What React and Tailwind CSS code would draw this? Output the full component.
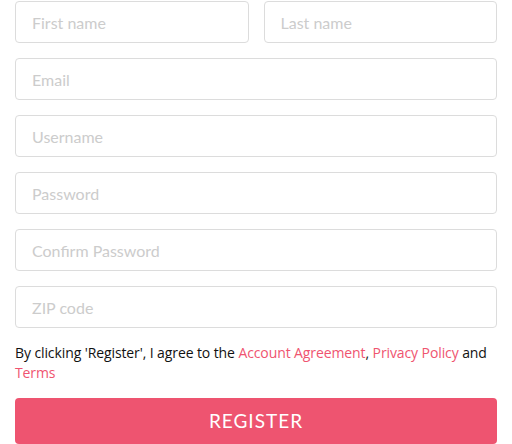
import { useState } from 'react'

// ── Field ─────────────────────────────────────────────────────
function Field({ placeholder, type = 'text' }) {
  return (
    <input
      type={type}
      placeholder={placeholder}
      className="w-full h-[42px] border border-[#dcdcdc] rounded-[4px] px-4 text-[16px] text-gray-800 placeholder:text-[#cccccc] bg-white focus:outline-none"
      style={{ fontFamily: 'Lato, sans-serif' }}
    />
  )
}

export default function App() {
  const [agree] = useState(true)
  return (
    <div className="w-[512px] h-[444px] bg-white overflow-hidden">
      <form className="pt-px px-[15px] flex flex-col gap-[15px]" onSubmit={e => e.preventDefault()}>
        <div className="grid grid-cols-2 gap-[15px]">
          <Field placeholder="First name" />
          <Field placeholder="Last name" />
        </div>
        <Field placeholder="Email" type="email" />
        <Field placeholder="Username" />
        <Field placeholder="Password" type="password" />
        <Field placeholder="Confirm Password" type="password" />
        <Field placeholder="ZIP code" />

        {agree && (
          <p className="text-[14px] leading-[20px] text-[#111] tracking-[-0.1px]"
            style={{ fontFamily: '"Open Sans", sans-serif' }}>
            By clicking 'Register', I agree to the <a href="#" className="text-[#ef5470]">Account Agreement</a>, <a href="#" className="text-[#ef5470]">Privacy Policy</a> and <a href="#" className="text-[#ef5470]">Terms</a>
          </p>
        )}

        <button type="submit"
          className="h-[46px] w-full rounded-[4px] bg-[#ee5470] text-white text-[19px] tracking-[1px]"
          style={{ fontFamily: 'Lato, sans-serif' }}>
          REGISTER
        </button>
      </form>
    </div>
  )
}
